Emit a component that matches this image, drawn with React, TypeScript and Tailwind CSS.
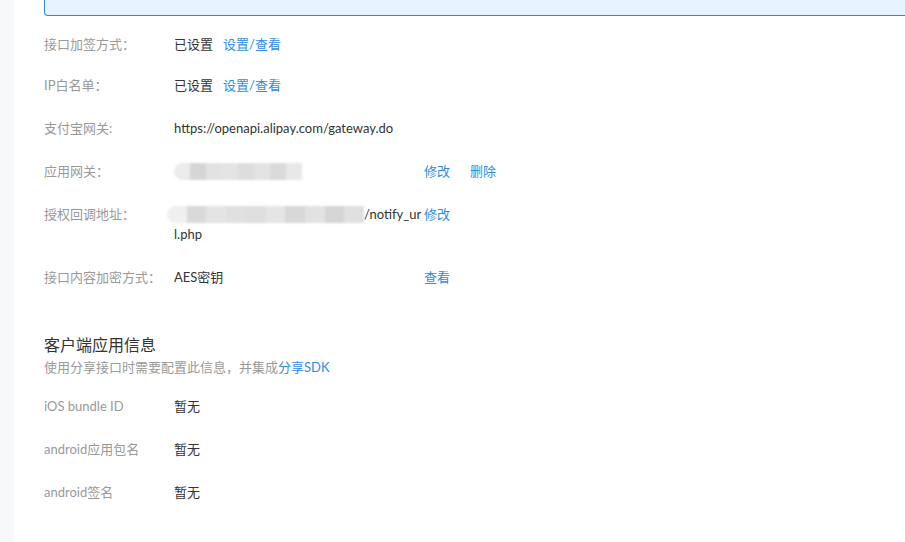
import React from 'react';

const font = { fontFamily: 'Lato, "Noto Sans CJK SC", sans-serif' };

function Blur({ w, shades }: { w: number; shades: string[] }) {
  return (
    <span className="relative inline-block h-[20px] align-top" style={{ width: w }}>
      <span className="absolute left-0 right-0 top-[2px] flex h-[17px] overflow-hidden rounded-l-full blur-[1px]">
        {shades.map((c, i) => (
          <span key={i} className="h-full flex-1" style={{ background: c }} />
        ))}
      </span>
    </span>
  );
}

function Row({
  label,
  children,
  actions,
}: {
  label: string;
  children: React.ReactNode;
  actions?: React.ReactNode;
}) {
  return (
    <div className="flex items-start text-[13px] leading-[20px]">
      <div className="w-[130px] shrink-0 text-[#999]">{label}</div>
      <div className="w-[248px] shrink-0 break-all text-[#333]">{children}</div>
      <div className="flex gap-[20px] pl-[2px] text-[#2d8ce6]">{actions}</div>
    </div>
  );
}

export default function App() {
  return (
    <div className="flex h-[542px] w-[905px] overflow-hidden bg-white" style={font}>
      <div className="w-[14px] shrink-0 bg-[#f6f8fb]" />
      <div className="flex-1 pl-[30px]">
        <div className="h-[16px] w-[900px] rounded-bl-[4px] border-b border-l border-[#2a8be0] bg-[#e6f3fc]" />

        <div className="mt-[18px] flex flex-col gap-[23px]">
          <Row label="接口加签方式：">
            <span>已设置</span>
            <span className="ml-[10px] text-[#2d8ce6]">设置/查看</span>
          </Row>
          <div className="-mt-[2px]">
            <Row label="IP白名单：">
              <span>已设置</span>
              <span className="ml-[10px] text-[#2d8ce6]">设置/查看</span>
            </Row>
          </div>
          <Row label="支付宝网关:">https://openapi.alipay.com/gateway.do</Row>
          <Row
            label="应用网关："
            actions={
              <>
                <span>修改</span>
                <span>删除</span>
              </>
            }
          >
            <Blur
              w={128}
              shades={['#ececec', '#d6d6d6', '#e2e2e2', '#e4e4e4', '#dddddd', '#e3e3e3', '#dadada', '#e8e8e8']}
            />
          </Row>
          <Row label="授权回调地址：" actions={<span>修改</span>}>
            <span className="-ml-[7px]">
              <Blur
                w={197}
                shades={['#efefef', '#d9d9d9', '#e4e4e4', '#e0e0e0', '#dedede', '#e5e5e5', '#d8d8d8', '#e2e2e2', '#d5d5d5', '#e0e0e0']}
              />
            </span>
            /notify_url.php
          </Row>
          <Row label="接口内容加密方式：" actions={<span>查看</span>}>
            AES密钥
          </Row>
        </div>

        <div className="mt-[47px] text-[16px] leading-[22px] text-[#333]">客户端应用信息</div>
        <div className="text-[13px] leading-[22px] text-[#999]">
          使用分享接口时需要配置此信息，并集成<span className="text-[#2d8ce6]">分享SDK</span>
        </div>

        <div className="mt-[18px] flex flex-col gap-[23px]">
          <Row label="iOS bundle ID">暂无</Row>
          <Row label="android应用包名">暂无</Row>
          <Row label="android签名">暂无</Row>
        </div>
      </div>
    </div>
  );
}
